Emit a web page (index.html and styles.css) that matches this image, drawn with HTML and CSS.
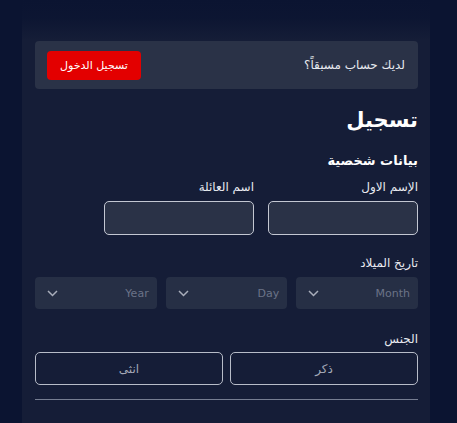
FILE: index.html
```html
<!DOCTYPE html>
<html lang="ar" dir="rtl">
<head>
  <meta charset="UTF-8" />
  <meta name="viewport" content="width=device-width, initial-scale=1.0"/>
  <title>تسجيل</title>
  <link rel="stylesheet" href="styles.css">
</head>
<body>
  <div class="page">
    <div class="fade"></div>
    <div class="card">
      <div class="notice">
        <span>لديك حساب مسبقاً؟</span>
        <button class="login">تسجيل الدخول</button>
      </div>

      <h1>تسجيل</h1>
      <h2>بيانات شخصية</h2>

      <div class="names">
        <div class="field">
          <label>الإسم الاول</label>
          <input type="text">
        </div>
        <div class="field">
          <label>اسم العائلة</label>
          <input type="text">
        </div>
      </div>

      <label class="group-label">تاريخ الميلاد</label>
      <div class="dates">
        <div class="select"><span>Month</span><svg width="11" height="7" viewBox="0 0 11 7"><polyline points="1,1 5.5,5.5 10,1" /></svg></div>
        <div class="select"><span>Day</span><svg width="11" height="7" viewBox="0 0 11 7"><polyline points="1,1 5.5,5.5 10,1" /></svg></div>
        <div class="select"><span>Year</span><svg width="11" height="7" viewBox="0 0 11 7"><polyline points="1,1 5.5,5.5 10,1" /></svg></div>
      </div>

      <label class="group-label gender-label">الجنس</label>
      <div class="genders">
        <button class="gender">ذكر</button>
        <button class="gender">انثى</button>
      </div>

      <hr>
    </div>
  </div>
</body>
</html>
```

FILE: styles.css
```css
body { margin: 0; background: #0b1431; font-family: "DejaVu Sans", sans-serif; color: #fff; }
.page { position: relative; height: 423px; overflow: hidden; }
.fade { position: absolute; top: 0; left: 0; right: 0; height: 40px; background: linear-gradient(#0b1431 0%, rgba(11,20,49,0.85) 45%, rgba(11,20,49,0) 100%); }
.card { box-sizing: border-box; width: 408px; margin-right: 27px; height: 423px; padding: 41px 12px 0 13px; background: #151d37; }

.notice { height: 48px; box-sizing: border-box; display: flex; align-items: center; justify-content: space-between; padding: 0 13px 0 12px; background: #2a3247; border-radius: 4px; font-size: 12px; color: #e8eaf0; }
.login { height: 29px; width: 94px; border: none; border-radius: 4px; background: #e30000; color: #fff; font-family: inherit; font-size: 11px; padding: 0; }

h1 { margin: 19px 0 0; font-size: 21px; line-height: 24px; font-weight: bold; }
h2 { margin: 19px 0 0; font-size: 13px; line-height: 20px; font-weight: bold; }

.names { display: flex; gap: 14px; margin-top: 8px; }
.field { width: 150px; display: flex; flex-direction: column; }
label { font-size: 12px; line-height: 16px; color: #e8eaf0; }
.field label { margin-bottom: 6px; }
.field input { box-sizing: border-box; height: 34px; width: 150px; background: #2a3247; border: 1px solid #c3c7d2; border-radius: 5px; }

.group-label { display: block; margin-top: 20px; margin-bottom: 6px; }
.gender-label { margin-top: 22px; margin-bottom: 5px; }

.dates { display: flex; gap: 9px; }
.select { box-sizing: border-box; width: 122px; height: 32px; display: flex; align-items: center; justify-content: space-between; padding: 0 8px 0 12px; background: #262f45; border-radius: 4px; font-size: 11px; color: #6b7388; }
.select svg polyline { fill: none; stroke: #a9aebb; stroke-width: 1.5; }

.genders { display: flex; gap: 7px; }
.gender { box-sizing: border-box; width: 188px; height: 33px; background: transparent; border: 1px solid #b7bcc8; border-radius: 5px; color: #a3a8b6; font-family: inherit; font-size: 12px; }

hr { margin: 14px 0 0; border: none; border-top: 1px solid #767d91; }
```
